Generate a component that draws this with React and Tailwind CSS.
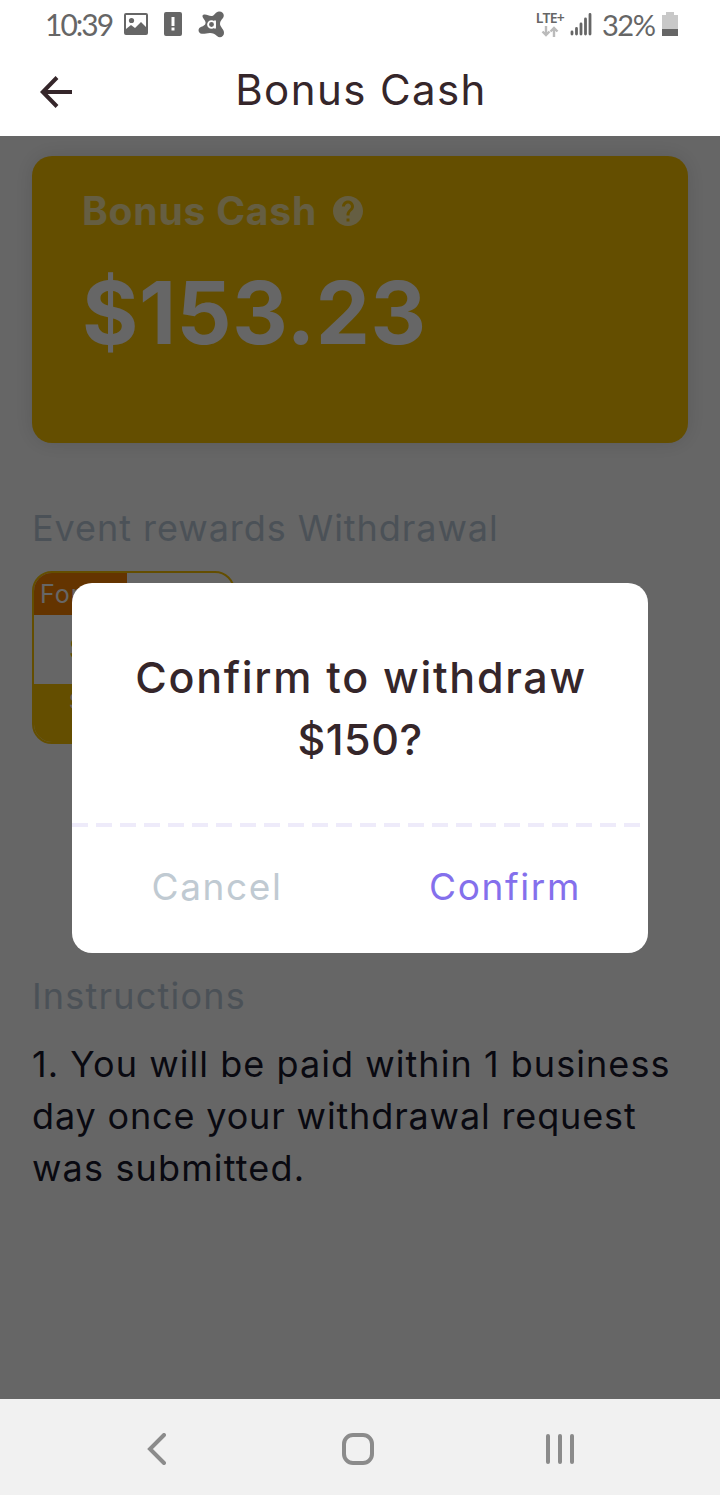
import { MdHelp } from 'react-icons/md'

function StatusBar() {
  return (
    <div className="flex h-12 items-center justify-between bg-white pr-[42px] pl-[45px] text-[#666]">
      <div className="flex items-center">
        <span className="w-[79px] font-['Lato'] text-[30px] leading-none font-normal tracking-[-2px]">10:39</span>
        <svg className="h-[22px] w-6" viewBox="0 0 24 22" fill="currentColor">
          <path fillRule="evenodd" d="M2 0h20a2 2 0 0 1 2 2v18a2 2 0 0 1-2 2H2a2 2 0 0 1-2-2V2a2 2 0 0 1 2-2zm0 2v14l5-4 4 3 6-6 5 5V2z" />
          <circle cx="7.500" cy="7.500" r="2.600" />
        </svg>
        <svg className="ml-4 h-6 w-[18px]" viewBox="0 0 18 24" fill="currentColor">
          <path fillRule="evenodd" d="M2 0h14a2 2 0 0 1 2 2v20a2 2 0 0 1-2 2H2a2 2 0 0 1-2-2V2a2 2 0 0 1 2-2zm5.500 5v9h3V5zm0 10.500v3h3v-3z" />
        </svg>
        <svg className="ml-4 h-[27px] w-[27px]" viewBox="0 0 27 27">
          <path
            d="M5 4c3-1.500 6 1.500 9 1 3-.5 3.500-4.500 7-4.500 4-.2 6 3.500 4 6.500-1.500 2-3 3-3 6s4 5 4 9-4.500 5.500-7 3c-2-2-4-3-7-3-4 0-6 1.500-9.500.5C0 21 0 18 2 16.500c3-1.500 6-2.500 5.500-5.500C7 8.500 3 6 5 4z"
            fill="currentColor"
          />
          <circle cx="13.500" cy="13.500" r="3.400" fill="none" stroke="#fff" strokeWidth="1.900" />
          <path d="M17 9.500V17.500" stroke="#fff" strokeWidth="1.900" />
        </svg>
      </div>
      <div className="flex items-center">
        <div className="-ml-0.5 flex w-[30px] flex-col items-center">
          <span className="font-['Noto_Sans'] text-[14px] leading-[11px] font-semibold tracking-[-0.700px]">LTE+</span>
          <svg className="mt-[3px] h-[11px] w-[18px] text-[#bbb]" viewBox="0 0 18 11" fill="none" stroke="currentColor" strokeWidth="2.400">
            <path d="M5 0v9M1.500 5.500 5 9l3.500-3.500M13 11V2M9.500 5.500 13 2l3.500 3.500" />
          </svg>
        </div>
        <svg className="ml-[5px] h-6 w-[22px]" viewBox="0 0 22 24" stroke="currentColor" strokeWidth="2.800" strokeLinecap="round">
          <path d="M2 20v2M6.500 16.500V22M11 12v10M15.500 7v15M20 2.500V22" />
        </svg>
        <span className="ml-[10px] w-[54px] font-['Lato'] text-[29px] leading-none font-normal tracking-[-1.500px]">32%</span>
        <svg className="ml-[6px] h-6 w-4" viewBox="0 0 16 24">
          <path d="M4 0h8v3h4v14H0V3h4z" fill="#c8c8c8" />
          <path d="M0 17h16v7H0z" fill="currentColor" />
        </svg>
      </div>
    </div>
  )
}

function Header() {
  return (
    <header className="grid h-[88px] grid-cols-[112px_1fr_112px] items-start bg-white text-[#35262a]">
      <svg className="mt-7 ml-10 size-8" viewBox="0 0 32 32" fill="none" stroke="currentColor" strokeWidth="4">
        <path d="M17 1.500 2.800 16 17 30.500M2.500 16H32" />
      </svg>
      <h1 className="mt-4 pl-0.5 text-center text-[42px] leading-[52px] font-normal tracking-[1.400px]">Bonus Cash</h1>
    </header>
  )
}

function BonusCard() {
  return (
    <section className="h-[287px] rounded-[20px] bg-[#fac300] pt-[31px] pl-[50px] shadow-[0_0_20px_rgba(0,0,0,0.12)]">
      <div className="flex h-12 items-center text-white/65">
        <h2 className="w-[248px] text-[39px] leading-[46px] font-bold tracking-[0.800px] whitespace-nowrap">Bonus Cash</h2>
        <MdHelp className="size-9" />
      </div>
      <p className="mt-[28px] text-[86px] leading-[100px] font-bold tracking-[0.600px] text-white">$153.23</p>
    </section>
  )
}

function RewardTile() {
  return (
    <div className="mt-[17px] flex h-[173px] w-[203px] flex-col overflow-hidden rounded-[20px] border-2 border-[#fac300] bg-white">
      <span className="h-[42px] w-[93px] bg-[#fa8200] pl-1.5 text-[25px] leading-[42px] tracking-[1px] whitespace-nowrap text-white">
        For new
      </span>
      <span className="flex-1 pl-[35px] text-[28px] leading-[69px] text-[#fac300]">$150</span>
      <span className="h-[60px] bg-[#fac300] pt-0.5 pl-[35px] text-[22px] leading-[30px] text-white">Start</span>
    </div>
  )
}

function ConfirmDialog() {
  return (
    <div className="w-[576px] rounded-[20px] bg-white">
      <h2 className="flex h-[240px] flex-col items-center pt-[63px] text-center text-[43px] leading-[62px] font-medium whitespace-nowrap text-[#35262a]">
        <span className="pl-0.5 tracking-[1.700px]">Confirm to withdraw</span>
        <span className="tracking-[0.500px]">$150?</span>
      </h2>
      <div className="h-1 bg-[repeating-linear-gradient(90deg,#eeebfa_0_16px,transparent_16px_24px)]" />
      <div className="grid h-[126px] grid-cols-2 items-start text-[37px] leading-[120px] tracking-[1.600px]">
        <button className="pl-0.5 text-[#c0cad2]">Cancel</button>
        <button className="pl-0.5 text-[#8470ec]">Confirm</button>
      </div>
    </div>
  )
}

function NavBar() {
  return (
    <nav className="flex h-24 items-center justify-between bg-[#f1f1f1] pt-1 pr-[146px] pl-[146px] text-[#8b8b8b]">
      <svg className="h-8 w-5" viewBox="0 0 20 32" fill="none" stroke="currentColor" strokeWidth="4" strokeLinecap="round">
        <path d="M18 2 4 16l14 14" />
      </svg>
      <span className="ml-1 size-8 rounded-[11px] border-4 border-current" />
      <span className="flex gap-2">
        <i className="h-[30px] w-1 rounded-full bg-current" />
        <i className="h-[30px] w-1 rounded-full bg-current" />
        <i className="h-[30px] w-1 rounded-full bg-current" />
      </span>
    </nav>
  )
}

export default function App() {
  return (
    <div className="flex h-[1495px] w-[720px] flex-col overflow-hidden bg-white font-['Inter',sans-serif]">
      <StatusBar />
      <Header />
      <main className="relative h-[1263px] overflow-hidden bg-white px-8 pt-5">
        <BonusCard />
        <h3 className="mt-[59px] text-[36px] leading-[52px] font-normal tracking-[0.950px] whitespace-nowrap text-[#bccbd9]">
          Event rewards Withdrawal
        </h3>
        <RewardTile />
        <h3 className="mt-[226px] text-[36px] leading-[52px] font-normal tracking-[1.200px] text-[#bccbd9]">Instructions</h3>
        <p className="mt-[16px] text-[36px] leading-[52px] whitespace-nowrap text-[#18182b]">
          <span className="block tracking-[1.050px]">1. You will be paid within 1 business</span>
          <span className="block tracking-[0.850px]">day once your withdrawal request</span>
          <span className="block tracking-[1.150px]">was submitted.</span>
        </p>
        <div className="absolute inset-0 flex items-start justify-center bg-black/60 pt-[447px]">
          <ConfirmDialog />
        </div>
      </main>
      <NavBar />
    </div>
  )
}
